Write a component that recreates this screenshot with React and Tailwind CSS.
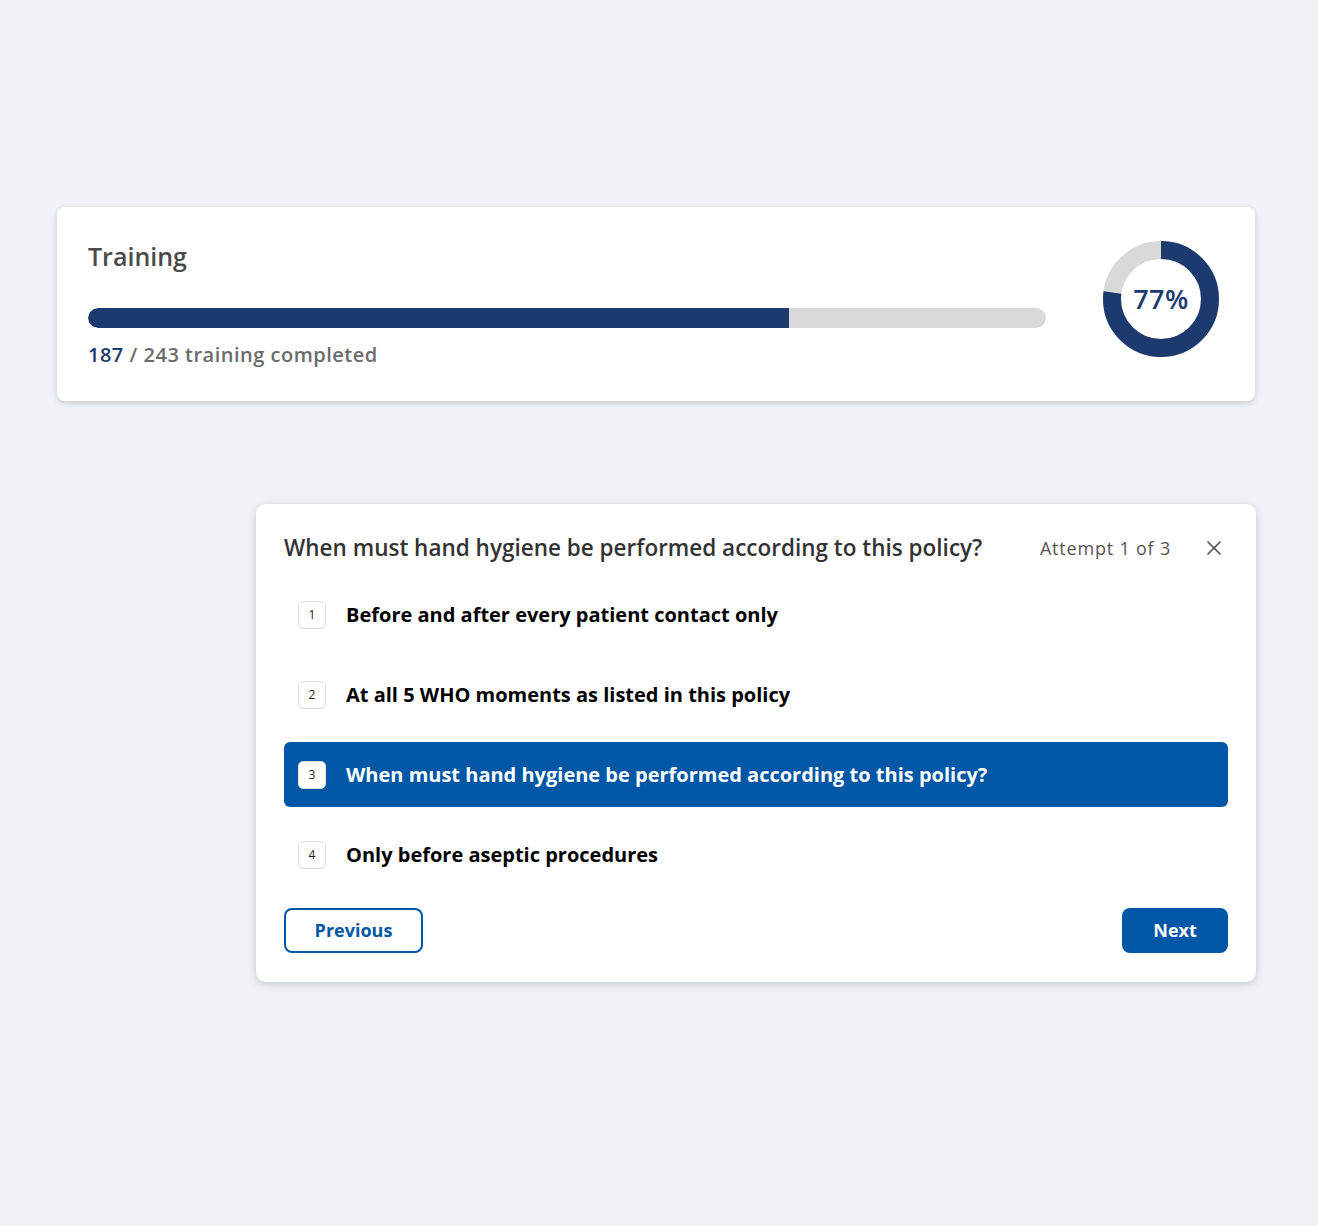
import { X } from 'lucide-react'

const OPTIONS = [
  { n: 1, label: 'Before and after every patient contact only' },
  { n: 2, label: 'At all 5 WHO moments as listed in this policy' },
  { n: 3, label: 'When must hand hygiene be performed according to this policy?' },
  { n: 4, label: 'Only before aseptic procedures' },
]

function Donut({ value }) {
  const r = 49
  const c = 2 * Math.PI * r
  return (
    <div className="relative w-[116px] h-[116px] shrink-0">
      <svg width="116" height="116" viewBox="0 0 116 116" className="-rotate-90">
        <circle cx="58" cy="58" r={r} fill="none" stroke="#d9d9d9" strokeWidth="18" />
        <circle
          cx="58" cy="58" r={r} fill="none" stroke="#1d3a6e" strokeWidth="18"
          strokeDasharray={`${c * value / 100} ${c}`}
        />
      </svg>
      <div className="absolute inset-0 flex items-center justify-center text-[27px] font-semibold tracking-[0.5px] text-[#1d3a6e]">
        {value}%
      </div>
    </div>
  )
}

export default function App() {
  const selected = 3

  return (
    <div className="min-h-[1226px] bg-[#eff2f7] pt-[207px]" style={{ fontFamily: '"Open Sans", "Noto Sans", sans-serif' }}>

      {/* ── Training progress ─────────────────────────────────── */}
      <div className="ml-[57px] w-[1198px] bg-white rounded-lg shadow-[0_2px_6px_rgba(0,0,0,0.18)] flex items-start pl-[31px] pr-[36px] pt-[33px] pb-[32px]">
        <div className="flex-1">
          <h2 className="text-[25px] leading-8 font-semibold text-[#4a4a4a]">Training</h2>
          <div className="mt-[36px] h-5 rounded-full bg-[#d9d9d9] overflow-hidden">
            <div className="h-full bg-[#1d3a6e] rounded-l-full" style={{ width: '73.2%' }} />
          </div>
          <p className="mt-[13px] text-[20px] leading-7 font-semibold tracking-[0.5px] text-[#6b6b6b]">
            <span className="text-[#1d3a6e]">187</span> / 243 training completed
          </p>
        </div>
        <div className="ml-[57px] mt-px">
          <Donut value={77} />
        </div>
      </div>

      {/* ── Quiz question ─────────────────────────────────────── */}
      <div className="ml-[256px] mt-[103px] w-[1000px] bg-white rounded-[10px] shadow-[0_2px_8px_rgba(0,0,0,0.18)] px-[28px] pt-[28px] pb-[29px]">
        <div className="flex items-center h-8">
          <h3 className="flex-1 text-[22.5px] font-semibold text-[#333]">
            When must hand hygiene be performed according to this policy?
          </h3>
          <span className="text-[18px] tracking-[0.8px] text-[#555]">Attempt 1 of 3</span>
          <button type="button" className="ml-[31px] mr-[2px] text-[#555]">
            <X size={24} strokeWidth={1.75} />
          </button>
        </div>

        <div className="mt-[18px] flex flex-col gap-[15px]">
          {OPTIONS.map(o => {
            const active = o.n === selected
            return (
              <div
                key={o.n}
                className={`h-[65px] flex items-center px-[14px] rounded-md ${active ? 'bg-[#0057a5] text-white' : 'text-black'}`}
              >
                <span className="w-7 h-7 flex items-center justify-center rounded-[5px] border border-[#dcdcdc] bg-white text-[12px] text-[#222]">
                  {o.n}
                </span>
                <span className="ml-[20px] text-[20px] font-bold">{o.label}</span>
              </div>
            )
          })}
        </div>

        <div className="mt-[21px] flex justify-between">
          <button type="button" className="w-[139px] h-[45px] rounded-lg border-2 border-[#0057a5] text-[#0057a5] text-[18px] font-bold">
            Previous
          </button>
          <button type="button" className="w-[106px] h-[45px] rounded-lg bg-[#0057a5] text-white text-[18px] font-bold">
            Next
          </button>
        </div>
      </div>
    </div>
  )
}
